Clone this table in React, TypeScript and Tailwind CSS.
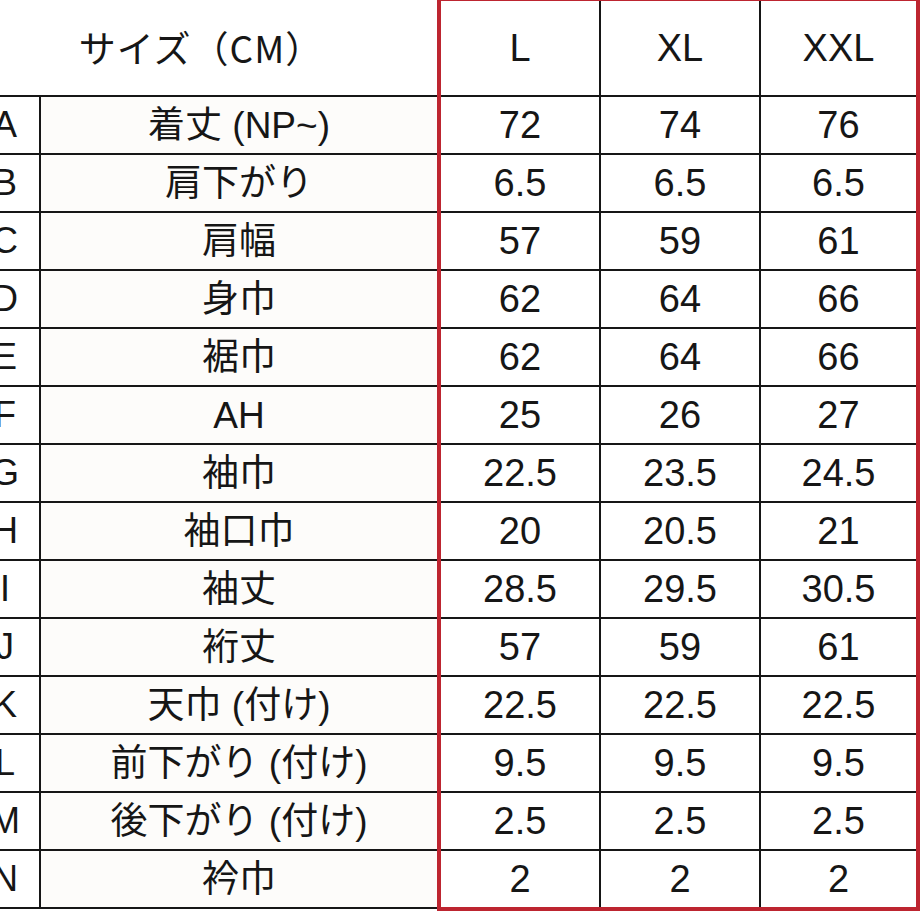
import React from "react";

const rows: [string, string, string, string, string][] = [
  ["A", "着丈 (NP~)", "72", "74", "76"],
  ["B", "肩下がり", "6.5", "6.5", "6.5"],
  ["C", "肩幅", "57", "59", "61"],
  ["D", "身巾", "62", "64", "66"],
  ["E", "裾巾", "62", "64", "66"],
  ["F", "AH", "25", "26", "27"],
  ["G", "袖巾", "22.5", "23.5", "24.5"],
  ["H", "袖口巾", "20", "20.5", "21"],
  ["I", "袖丈", "28.5", "29.5", "30.5"],
  ["J", "裄丈", "57", "59", "61"],
  ["K", "天巾 (付け)", "22.5", "22.5", "22.5"],
  ["L", "前下がり (付け)", "9.5", "9.5", "9.5"],
  ["M", "後下がり (付け)", "2.5", "2.5", "2.5"],
  ["N", "衿巾", "2", "2", "2"],
];

const font = { fontFamily: '"Liberation Sans", "Noto Sans CJK JP", sans-serif' };

export default function App() {
  return (
    <div
      className="w-[920px] h-[920px] overflow-hidden bg-white text-[#161616]"
      style={font}
    >
      <div className="flex items-start">
        {/* left part */}
        <div className="ml-[-29px] w-[466px] shrink-0 flex flex-col">
          <div className="h-[95px] flex items-center justify-center">
            <span
              className="text-[37px] leading-none tracking-[1px] ml-[-6px]"
              style={{ fontFamily: '"Noto Sans CJK JP", "Liberation Sans", sans-serif' }}
            >
              サイズ（CM）
            </span>
          </div>
          {rows.map((r, i) => (
            <div
              key={r[0]}
              className={`flex border-t-2 border-[#161616] ${i === rows.length - 1 ? "border-b-2 h-[60px]" : "h-[58px]"}`}
            >
              <div className="w-[70px] border-r-2 border-[#161616] flex items-center justify-center text-[36px] leading-none text-[#161616]">
                {r[0]}
              </div>
              <div className="w-[396px] bg-[#fdfcfa] flex items-center justify-center text-[37px] leading-none whitespace-nowrap">
                {r[1]}
              </div>
            </div>
          ))}
        </div>
        {/* right red box */}
        <div className="mt-[-3px] w-[483px] shrink-0 border-4 border-[#bd2530] flex flex-col">
          <div className="h-[94px] grid grid-cols-[158px_160px_157px] text-[38px] leading-none">
            <div className="flex items-center justify-center">L</div>
            <div className="flex items-center justify-center border-l-2 border-[#161616]">XL</div>
            <div className="flex items-center justify-center border-l-2 border-[#161616]">XXL</div>
          </div>
          {rows.map((r) => (
            <div
              key={r[0]}
              className="h-[58px] grid grid-cols-[158px_160px_157px] border-t-2 border-[#161616] text-[38px] leading-none"
            >
              <div className="flex items-center justify-center">{r[2]}</div>
              <div className="flex items-center justify-center border-l-2 border-[#161616]">{r[3]}</div>
              <div className="flex items-center justify-center border-l-2 border-[#161616]">{r[4]}</div>
            </div>
          ))}
        </div>
      </div>
    </div>
  );
}
